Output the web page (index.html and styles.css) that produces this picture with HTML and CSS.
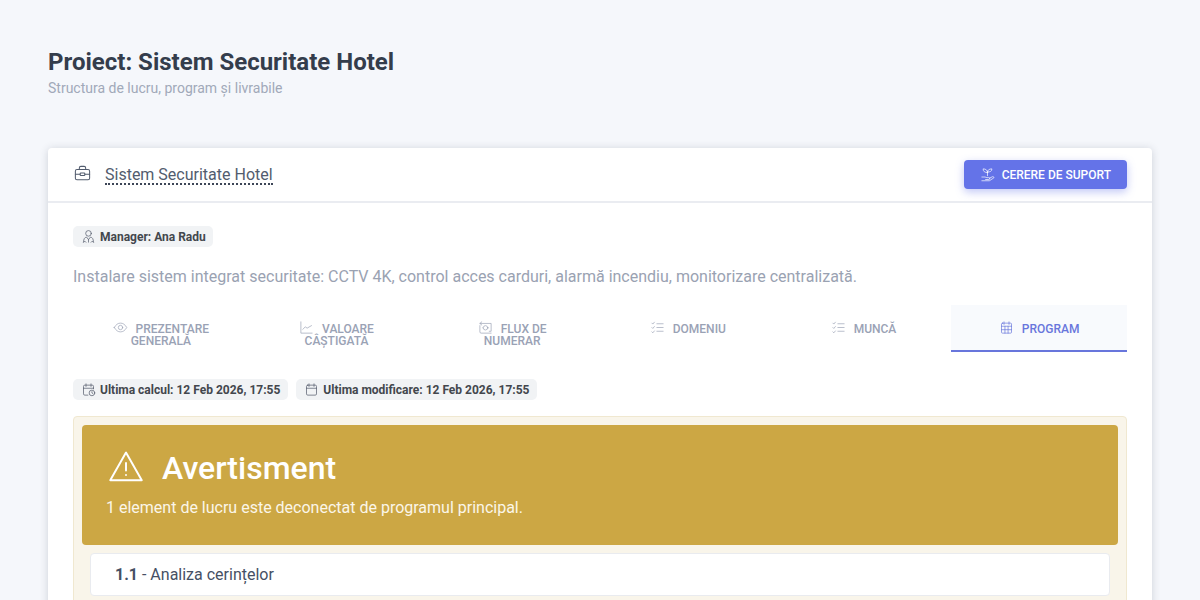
FILE: index.html
```html
<!DOCTYPE html>
<html lang="ro">
<head>
  <meta charset="UTF-8" />
  <title>Proiect: Sistem Securitate Hotel</title>
  <link rel="stylesheet" href="styles.css">
</head>
<body>

<div class="page-title">
  <h1>Proiect: Sistem Securitate Hotel</h1>
  <p>Structura de lucru, program și livrabile</p>
</div>

<div class="card">
  <div class="card-header">
    <div class="card-title">
      <svg class="ico-title" viewBox="0 0 24 24"><rect x="3" y="7" width="18" height="13" rx="2"/><path d="M8 7V5a2 2 0 0 1 2-2h4a2 2 0 0 1 2 2v2"/><path d="M3 13h6M15 13h6"/><rect x="9" y="11.500" width="6" height="3" rx="1"/></svg>
      <span class="title-link">Sistem Securitate Hotel</span>
    </div>
    <button class="btn-support">
      <svg class="ico-btn" viewBox="0 0 24 24"><path d="M12 14V8"/><path d="M12 9C12 5 9.500 3 5 3c0 4 2.500 6 7 6z"/><path d="M12 8c0-3 2.500-5 7-5 0 4-2.500 5-7 5z"/><path d="M3 16h5l3 1h3a1.500 1.500 0 0 1 0 3H9"/><path d="M15 18l5-2.500a1.500 1.500 0 0 1 2 2L15 22H3"/></svg>
      Cerere de suport
    </button>
  </div>

  <div class="card-body">
    <div class="chips">
      <span class="chip">
        <svg class="ico-chip" viewBox="0 0 24 24"><circle cx="12" cy="7" r="4.500"/><path d="M4 21c0-5 2-8 5-8l3 4 3-4c3 0 5 3 5 8"/><path d="M12 17v4M4 21c1-1.500 3-1.500 4 0M16 21c1-1.500 3-1.500 4 0"/></svg>
        Manager: Ana Radu
      </span>
    </div>
    <p class="desc">Instalare sistem integrat securitate: CCTV 4K, control acces carduri, alarmă incendiu, monitorizare centralizată.</p>

    <div class="tabs">
      <div class="tab">
        <svg class="ico-tab" viewBox="0 0 24 24"><path d="M2 12c3-5 6-7 10-7s7 2 10 7c-3 5-6 7-10 7s-7-2-10-7z"/><circle cx="12" cy="12" r="3.500"/></svg>
        Prezentare generală
      </div>
      <div class="tab">
        <svg class="ico-tab" viewBox="0 0 24 24"><path d="M3 3v18h18"/><path d="M6 15l4-4 3 2 7-4"/></svg>
        Valoare câștigată
      </div>
      <div class="tab">
        <svg class="ico-tab" viewBox="0 0 24 24"><path d="M6 3L3 5.500 6 8"/><path d="M3 5.500h18V18H18M21 21H5a2 2 0 0 1-2-2V9"/><circle cx="12" cy="12.500" r="3.500"/><path d="M7 12.500h.01M17 12.500h.01"/></svg>
        Flux de numerar
      </div>
      <div class="tab">
        <svg class="ico-tab" viewBox="0 0 24 24"><path d="M3 5l1.500 1.500L7 3.500M3 12l1.500 1.500L7 10.500M3 19l1.500 1.500L7 17.500"/><path d="M11 6h10M11 12h10M11 18h10"/></svg>
        Domeniu
      </div>
      <div class="tab">
        <svg class="ico-tab" viewBox="0 0 24 24"><path d="M3 5l1.500 1.500L7 3.500M3 12l1.500 1.500L7 10.500M3 19l1.500 1.500L7 17.500"/><path d="M11 6h10M11 12h10M11 18h10"/></svg>
        Muncă
      </div>
      <div class="tab active">
        <svg class="ico-tab" viewBox="0 0 24 24"><rect x="4" y="5" width="16" height="16" rx="1.500"/><path d="M8 3v4M16 3v4M4 10h16M4 15.500h16M9.500 10v11M14.500 10v11"/></svg>
        Program
      </div>
    </div>

    <div class="chips dates">
      <span class="chip">
        <svg class="ico-chip" viewBox="0 0 24 24"><path d="M11 21H6a2 2 0 0 1-2-2V7a2 2 0 0 1 2-2h12a2 2 0 0 1 2 2v4"/><path d="M8 3v4M16 3v4M4 10h16"/><circle cx="17.500" cy="17.500" r="4.500"/><path d="M17.500 15.500v2l1.500 1"/></svg>
        Ultima calcul: 12 Feb 2026, 17:55
      </span>
      <span class="chip">
        <svg class="ico-chip" viewBox="0 0 24 24"><rect x="4" y="5" width="16" height="16" rx="2"/><path d="M8 3v4M16 3v4M4 10h16"/></svg>
        Ultima modificare: 12 Feb 2026, 17:55
      </span>
    </div>

    <div class="warn-box">
      <div class="warn-banner">
        <div class="warn-head">
          <svg class="ico-warn" viewBox="0 0 24 24"><path d="M12 3L1.500 21.500h21z"/><path d="M12 10v5M12 18h.01"/></svg>
          <h2>Avertisment</h2>
        </div>
        <p>1 element de lucru este deconectat de programul principal.</p>
      </div>
      <div class="warn-item"><b>1.1</b> - Analiza cerințelor</div>
    </div>
  </div>
</div>

</body>
</html>
```

FILE: styles.css
```css
html, body {
  height: 600px;
  overflow: hidden;
}
body {
  font-family: Roboto, Arial, sans-serif;
  margin: 0;
  padding: 0 48px;
  background: #f5f7fb;
  color: #3e4a5c;
}
.page-title {
  padding: 46px 0 51px;
}
.page-title h1 {
  margin: 0;
  font-size: 24px;
  line-height: 32px;
  font-weight: 700;
  color: #343d4c;
}
.page-title p {
  margin: 1px 0 0;
  font-size: 14px;
  line-height: 18px;
  color: #a1a9b9;
}
.card {
  background: white;
  border-radius: 4px;
  box-shadow: 0 1px 8px rgba(50,60,80,0.2);
}
.card-header {
  display: flex;
  justify-content: space-between;
  align-items: center;
  padding: 12px 25px;
  border-bottom: 2px solid #eaecf1;
}
.card-title {
  display: flex;
  align-items: center;
  gap: 13px;
  font-size: 16px;
}
.title-link {
  color: #525c6e;
  border-bottom: 2px dotted #3d4657;
  line-height: 17px;
  margin-top: 2px;
}
.ico-title, .ico-btn, .ico-chip, .ico-tab, .ico-warn {
  fill: none;
  stroke: currentColor;
  stroke-width: 1.500;
  stroke-linecap: round;
  stroke-linejoin: round;
  flex: none;
}
.ico-title {
  width: 19px;
  height: 19px;
  color: #525c6e;
  stroke-width: 1.300;
  margin-top: -2px;
}
.btn-support {
  display: flex;
  align-items: center;
  gap: 7px;
  height: 29px;
  padding: 0 16px;
  background: #6473e8;
  color: white;
  border: none;
  border-radius: 4px;
  font-family: inherit;
  font-size: 12px;
  font-weight: 500;
  text-transform: uppercase;
  box-shadow: 0 3px 8px rgba(100,115,232,0.4);
}
.ico-btn {
  width: 15px;
  height: 15px;
  stroke-width: 1.100;
}
.card-body {
  padding: 23px 25px 0;
}
.chips {
  display: flex;
  gap: 8px;
}
.chip {
  display: inline-flex;
  align-items: center;
  gap: 4px;
  height: 21px;
  padding: 0 7.500px 0 8px;
  background: #f1f3f5;
  border-radius: 5px;
  font-size: 12px;
  font-weight: 700;
  color: #43474d;
}
.dates .chip {
  padding-right: 8px;
}
.ico-chip {
  width: 15px;
  height: 15px;
  stroke-width: 1.200;
  color: #5a6070;
}
.desc {
  margin: 19px 0 0;
  font-size: 16px;
  line-height: 22px;
  color: #9aa2b2;
}
.tabs {
  display: grid;
  grid-template-columns: repeat(6, 1fr);
  margin-top: 17px;
}
.tab {
  height: 47px;
  box-sizing: border-box;
  padding: 15px 37px 0;
  text-align: center;
  font-size: 12px;
  line-height: 12px;
  font-weight: 500;
  text-transform: uppercase;
  color: #9aa2b5;
}
.tab.active {
  background: #f8fafd;
  color: #6876dc;
  border-bottom: 2px solid #6876dc;
}
.ico-tab {
  width: 15px;
  height: 15px;
  vertical-align: -2px;
  margin-right: 5px;
  stroke-width: 1.100;
}
.dates {
  margin-top: 27px;
}
.warn-box {
  margin-top: 16px;
  padding: 8px;
  height: 300px;
  background: #f9f5ea;
  border: 1px solid #f0e8d0;
  border-radius: 4px;
}
.warn-banner {
  background: #cca744;
  color: white;
  border-radius: 4px;
  padding: 24px;
  height: 120px;
  box-sizing: border-box;
}
.warn-head {
  display: flex;
  align-items: center;
  gap: 18px;
}
.warn-head h2 {
  margin: 0;
  font-size: 32px;
  line-height: 38px;
  font-weight: 500;
}
.ico-warn {
  width: 36px;
  height: 36px;
  stroke-width: 1.300;
  margin: -4px 0 0 2px;
}
.warn-banner p {
  margin: 10px 0 0;
  font-size: 16px;
  line-height: 22px;
  color: #fbf6e9;
}
.warn-item {
  margin: 8px 8px 0;
  padding: 0 24px;
  height: 41px;
  line-height: 41px;
  background: white;
  border: 1px solid #e9ebef;
  border-radius: 4px;
  font-size: 16px;
  color: #465064;
}
.warn-item b {
  font-weight: 700;
}
```
